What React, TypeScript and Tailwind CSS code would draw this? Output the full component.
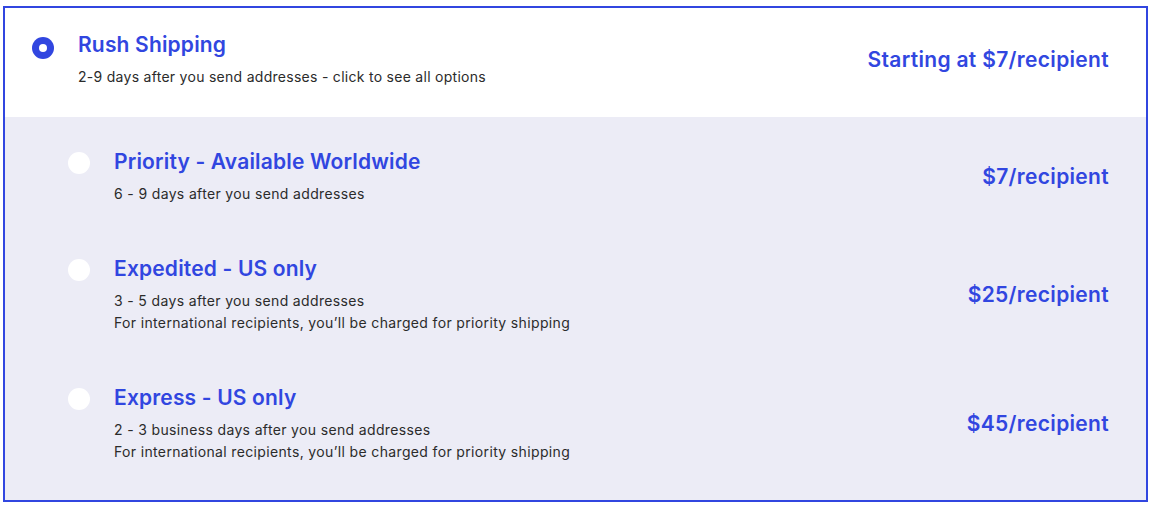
import React from "react";

interface ShippingOption {
  id: string;
  title: string;
  lines: string[];
  price: string;
}

const OPTIONS: ShippingOption[] = [
  {
    id: "priority",
    title: "Priority - Available Worldwide",
    lines: ["6 - 9 days after you send addresses"],
    price: "$7/recipient",
  },
  {
    id: "expedited",
    title: "Expedited - US only",
    lines: [
      "3 - 5 days after you send addresses",
      "For international recipients, you\u2019ll be charged for priority shipping",
    ],
    price: "$25/recipient",
  },
  {
    id: "express",
    title: "Express - US only",
    lines: [
      "2 - 3 business days after you send addresses",
      "For international recipients, you\u2019ll be charged for priority shipping",
    ],
    price: "$45/recipient",
  },
];

function Radio({ checked }: { checked?: boolean }) {
  if (checked) {
    return (
      <span className="mt-[6px] flex h-[22px] w-[22px] shrink-0 items-center justify-center rounded-full bg-[#3146e0]">
        <span className="h-[8px] w-[8px] rounded-full bg-white" />
      </span>
    );
  }
  return <span className="mt-[4px] h-[22px] w-[22px] shrink-0 rounded-full bg-white" />;
}

function Title({ children }: { children: React.ReactNode }) {
  return (
    <div className="text-[21px] font-semibold leading-[28px] tracking-[0.008em] text-[#3146e0]">
      {children}
    </div>
  );
}

function Price({ children }: { children: React.ReactNode }) {
  return (
    <div className="text-[21px] font-semibold leading-[28px] tracking-[0.015em] text-[#3146e0]">
      {children}
    </div>
  );
}

function OptionRow({ option }: { option: ShippingOption }) {
  return (
    <div className="flex items-center justify-between">
      <div className="flex items-start gap-6">
        <Radio />
        <div>
          <Title>{option.title}</Title>
          <div className="mt-[7px] text-[14px] leading-[22px] tracking-[0.025em] text-[#2b2b2b]">
            {option.lines.map((line) => (
              <div key={line}>{line}</div>
            ))}
          </div>
        </div>
      </div>
      <Price>{option.price}</Price>
    </div>
  );
}

export default function App() {
  return (
    <div
      className="min-h-screen bg-white pl-[3px] pr-[6px] pt-[6px]"
      style={{ fontFamily: "Inter, 'Noto Sans', sans-serif" }}
    >
      <div className="border-2 border-[#3146e0]">
        {/* Selected group header */}
        <div className="flex items-center justify-between bg-white pb-[29px] pl-[27px] pr-[37px] pt-[23px]">
          <div className="flex items-start gap-6">
            <Radio checked />
            <div>
              <Title>Rush Shipping</Title>
              <div className="mt-[7px] text-[14px] leading-[22px] tracking-[0.02em] text-[#2b2b2b]">
                2-9 days after you send addresses - click to see all options
              </div>
            </div>
          </div>
          <Price>Starting at $7/recipient</Price>
        </div>

        {/* Options list */}
        <div className="flex flex-col gap-[50px] bg-[#ececf6] pb-[37px] pl-[63px] pr-[37px] pt-[31px]">
          {OPTIONS.map((o) => (
            <OptionRow key={o.id} option={o} />
          ))}
        </div>
      </div>
    </div>
  );
}
